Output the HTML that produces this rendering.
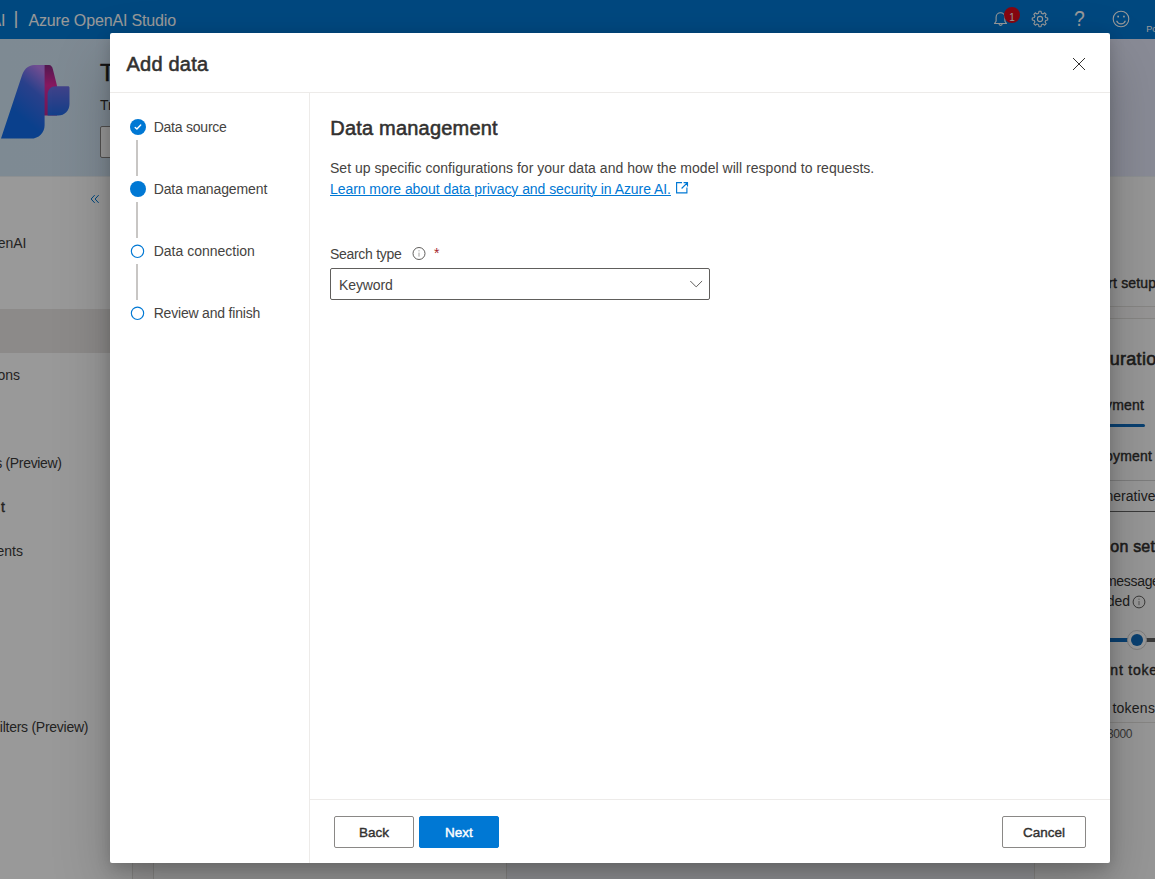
<!DOCTYPE html>
<html lang="en">
<head>
<meta charset="utf-8">
<title>Azure OpenAI Studio - Add data</title>
<style>
*{box-sizing:border-box;margin:0;padding:0}
html,body{width:1155px;height:879px;overflow:hidden;background:#fff}
body{font-family:"Liberation Sans",sans-serif;font-size:14px;color:#323130;position:relative}
.abs{position:absolute}
.t{position:absolute;white-space:nowrap;line-height:20px}
.sb{font-weight:400;-webkit-text-stroke:0.4px currentColor}
.sbl{font-weight:400;-webkit-text-stroke:0.55px currentColor}
/* ---------- background page ---------- */
#page{position:absolute;left:0;top:0;width:1155px;height:879px;background:#fff;overflow:hidden}
#topbar{position:absolute;left:0;top:0;width:1155px;height:39px;background:#0078d4}
#banner{position:absolute;left:0;top:39px;width:1155px;height:137px;background:linear-gradient(90deg,#d3e6f6 0%,#d8e8f8 60%,#e5e8fa 100%)}
#nav{position:absolute;left:0;top:176px;width:133px;height:703px;background:#fff;border-right:1px solid #e1dfdd}
#navsel{position:absolute;left:0;top:133px;width:132px;height:44px;background:#e9e7e5}
#main{position:absolute;left:133px;top:176px;width:1022px;height:703px;background:#faf9f8}
#rp{position:absolute;left:901px;top:0;width:121px;height:703px;background:#fcfcfc;border-left:1px solid #e1dfdd;overflow:hidden}
.nv{color:#3b3a39}
#mside .t,#mbody .t{color:#454341}
#mbody .t.sbl{color:#323130}
#overlay{position:absolute;left:0;top:0;width:1155px;height:879px;background:rgba(0,0,0,.4)}
/* ---------- modal ---------- */
#modal{position:absolute;left:110px;top:33px;width:1000px;height:830px;background:#fff;border-radius:2px;
 box-shadow:0 25.6px 57.6px 0 rgba(0,0,0,.22),0 4.8px 14.4px 0 rgba(0,0,0,.18)}
#mhead{position:absolute;left:0;top:0;width:1000px;height:60px;border-bottom:1px solid #edebe9}
#mside{position:absolute;left:0;top:60px;width:200px;height:770px;border-right:1px solid #edebe9}
#mfoot{position:absolute;left:200px;top:766px;width:800px;height:64px;border-top:1px solid #edebe9}
.dot{position:absolute;width:16px;height:16px;border-radius:50%;left:20px}
.dot.fill{background:#0078d4}
.dot.open{border:1px solid #0078d4;background:#fff}
.conn{position:absolute;left:26px;width:2px;height:36px;background:#c8c6c4}
.btn{position:absolute;height:32px;padding:0;margin:0;font-family:inherit;display:block;border:1px solid #8a8886;border-radius:2px;background:#fff;text-align:center;line-height:31px;font-weight:400;-webkit-text-stroke:0.4px currentColor;font-size:13.5px;color:#323130}
.btn.primary{background:#0078d4;border-color:#0078d4;color:#fff}
</style>
</head>
<body>
<div id="page">
  <div id="topbar">
    <div class="t" style="left:-9.6px;top:11px;font-size:16px;line-height:20px;color:#fff">AI</div>
    <div class="t" style="left:13.6px;top:6px;font-size:19px;line-height:24px;color:#fff">|</div>
    <div class="t" id="brand" style="left:28.5px;top:11px;font-size:16px;line-height:20px;color:#fff;letter-spacing:-0.15px">Azure OpenAI Studio</div>
    <svg class="abs" style="left:992px;top:10px" width="18" height="18" viewBox="0 0 18 18" fill="none" stroke="#fff" stroke-width="1.1"><path d="M2.5 13.5h12l-1.6-2.2V7.2a4.4 4.4 0 0 0-8.8 0v4.1z" stroke-linejoin="round"/><path d="M7 13.8a1.6 1.6 0 0 0 3.2 0"/></svg>
    <div class="abs" style="left:1004px;top:7px;width:16px;height:16px;border-radius:50%;background:#e00b1c"></div>
    <div class="t" style="left:1004px;top:9.5px;width:16px;text-align:center;font-size:10px;line-height:16px;color:#fff">1</div>
    <svg class="abs" style="left:1031px;top:10px" width="18" height="18" viewBox="-9 -9 18 18" fill="none" stroke="#fff" stroke-width="1.1"><circle r="2.6"/><path d="M-1.43 -5.72 L-1.07 -7.73 L1.07 -7.73 L1.43 -5.72 L3.04 -5.06 L4.71 -6.22 L6.22 -4.71 L5.06 -3.04 L5.72 -1.43 L7.73 -1.07 L7.73 1.07 L5.72 1.43 L5.06 3.04 L6.22 4.71 L4.71 6.22 L3.04 5.06 L1.43 5.72 L1.07 7.73 L-1.07 7.73 L-1.43 5.72 L-3.04 5.06 L-4.71 6.22 L-6.22 4.71 L-5.06 3.04 L-5.72 1.43 L-7.73 1.07 L-7.73 -1.07 L-5.72 -1.43 L-5.06 -3.04 L-6.22 -4.71 L-4.71 -6.22 L-3.04 -5.06Z" stroke-linejoin="round"/></svg>
    <div class="t" style="left:1074.4px;top:6px;font-size:22px;line-height:26px;color:#fff;transform:scaleX(.88);transform-origin:0 0">?</div>
    <svg class="abs" style="left:1111.7px;top:10px" width="18" height="18" viewBox="-9 -9 18 18" fill="none" stroke="#fff" stroke-width="1.1"><circle r="7.8"/><path d="M-4.4 1.8a4.7 4.7 0 0 0 8.8 0"/><rect x="-3.7" y="-3.3" width="1.7" height="1.7" fill="#fff" stroke="none"/><rect x="2.1" y="-3.3" width="1.7" height="1.7" fill="#fff" stroke="none"/></svg>
    <div class="t" style="left:1146.3px;top:23.4px;font-size:9px;line-height:12px;color:#fff">Po</div>
  </div>
  <div id="banner">
    <svg class="abs" style="left:0;top:21px" width="80" height="90" viewBox="0 60 80 90">
      <defs>
        <linearGradient id="lgA" x1="0.8" y1="0" x2="0.45" y2="0.7"><stop offset="0" stop-color="#bb80f2"/><stop offset=".42" stop-color="#466ce8"/><stop offset="1" stop-color="#116ce9"/></linearGradient>
        <linearGradient id="lgB" x1="0" y1="0" x2="0" y2="1"><stop offset="0" stop-color="#8a2884"/><stop offset=".4" stop-color="#e0289f"/><stop offset="1" stop-color="#b8288f"/></linearGradient>
        <linearGradient id="lgC" x1="0" y1="0" x2="0" y2="1"><stop offset="0" stop-color="#6e6fe6"/><stop offset="1" stop-color="#216ae6"/></linearGradient>
      </defs>
      <path d="M43 65h6c2 0 3.2 1.6 3.9 4.3l4.1 16.4v29.7H43z" fill="url(#lgB)"/>
      <path d="M1 138.6 21.6 76.5C23.6 70 27.6 65 34.5 65h10.1v60.2c0 7.6-5.9 13.4-13.6 13.4z" fill="url(#lgA)"/>
      <path d="M47.6 115.6V94.5c0-4.8 3.4-8.3 8.2-8.3h12.2c1 0 1.5.6 1.5 1.6v16c0 6.6-4.8 11.8-11.4 11.8z" fill="url(#lgC)"/>
    </svg>
    <div class="t sbl" style="left:100px;top:17.5px;font-size:24px;line-height:32px;color:#201f1e">T</div>
    <div class="t" style="left:100px;top:56px;font-size:14px;line-height:20px;color:#323130">Tr</div>
    <div class="abs" style="left:100px;top:87px;width:60px;height:32px;border:1px solid #8a8886;border-radius:2px;background:#fff"></div>
  </div>
  <div id="nav">
    <div id="navsel"></div>
    <svg class="abs" style="left:90.2px;top:18px" width="11" height="10" viewBox="0 0 11 10" fill="none" stroke="#0078d4" stroke-width="1"><path d="M4.7 1.1 1.1 5l3.6 3.9M8.7 1.1 5.1 5l3.6 3.9"/></svg>
    <div class="t nv" style="right:105.5px;top:57px">enAI</div>
    <div class="t nv" style="right:112px;top:189.4px">ons</div>
    <div class="t nv" style="right:70.4px;top:277px;letter-spacing:-.34px">s (Preview)</div>
    <div class="t nv sb" style="right:127px;top:321px">t</div>
    <div class="t nv" style="right:109px;top:365px">ents</div>
    <div class="t nv" style="right:43.8px;top:541px;letter-spacing:-.26px">ilters (Preview)</div>
  </div>
  <div id="main">
    <div class="abs" style="left:20px;top:0;width:354px;height:740px;background:#fff;border:1px solid #e1dfdd"></div>
    <div class="abs" style="left:373px;top:0;width:529px;height:740px;background:#f3f6fa;border:1px solid #e1dfdd"></div>
    <div id="rp">
      <div class="t sb" style="left:73.3px;top:97px;letter-spacing:.15px">rt setup</div>
      <div class="abs" style="left:0;top:130px;width:140px;height:13px;border-top:1px solid #e1dfdd;border-bottom:1px solid #e1dfdd;background:#faf9f8"></div>
      <div class="t sbl" style="left:74.7px;top:171px;font-size:18px;line-height:24px;letter-spacing:.3px">uratio</div>
      <div class="t sb" style="left:70px;top:219px;letter-spacing:.2px">yment</div>
      <div class="abs" style="left:60px;top:248px;width:50px;height:3px;background:#0f6cbd;border-radius:0 2px 2px 0"></div>
      <div class="t sb" style="left:70px;top:270px;letter-spacing:.2px">oyment</div>
      <div class="abs" style="left:0;top:304px;width:140px;height:32px;border-top:1px solid #d1d1d1;border-bottom:1px solid #616161"></div>
      <div class="t" style="left:70.4px;top:310px;letter-spacing:.05px">nerative</div>
      <div class="t sbl" style="left:75.3px;top:359.5px;font-size:16px;line-height:22px;letter-spacing:.2px">on sett</div>
      <div class="t" style="left:69.9px;top:394.7px;letter-spacing:-.3px">messages</div>
      <div class="t" style="left:71.7px;top:414.6px">ded</div>
      <svg class="abs" style="left:96.7px;top:418.5px" width="14" height="14" viewBox="0 0 14 14" fill="none" stroke="#605e5c" stroke-width="1"><circle cx="7" cy="7" r="5.9"/><path d="M7 6v4.2M7 3.6v1.2" stroke="#8a8886"/></svg>
      <div class="abs" style="left:0;top:462px;width:102px;height:4px;background:#0f6cbd"></div>
      <div class="abs" style="left:102px;top:462px;width:40px;height:4px;background:#616161"></div>
      <div class="abs" style="left:92px;top:454px;width:20px;height:20px;border-radius:50%;background:#fff;border:1px solid #d1d1d1"></div>
      <div class="abs" style="left:96px;top:458px;width:12px;height:12px;border-radius:50%;background:#0f6cbd"></div>
      <div class="t sb" style="left:75.3px;top:484px;letter-spacing:.8px">nt token</div>
      <div class="t" style="left:77.4px;top:521.5px;letter-spacing:.25px">tokens</div>
      <div class="abs" style="left:0;top:546px;width:140px;height:1px;background:#e1dfdd"></div>
      <div class="t" style="left:71.9px;top:550.3px;font-size:12px;line-height:16px;color:#605e5c;letter-spacing:-.4px">3000</div>
    </div>
  </div>
</div>
<div class="abs" style="left:0;top:176px;width:1155px;height:1px;background:#ecf0f4"></div>
<div id="overlay"></div>
<div id="modal" role="dialog" aria-label="Add data">
  <div id="mhead">
    <div class="t sbl" id="mtitle" style="left:16.5px;top:17px;font-size:20px;line-height:28px;letter-spacing:0.22px">Add data</div>
    <svg class="abs" style="left:962px;top:24px" width="14" height="14" viewBox="0 0 14 14" fill="none" stroke="#323130" stroke-width="1"><path d="M1 1 13 13M13 1 1 13"/></svg>
  </div>
  <div id="mside">
    <svg class="abs" style="left:20px;top:26px" width="16" height="16" viewBox="0 0 16 16"><circle cx="8" cy="8" r="8" fill="#0078d4"/><path d="M5.2 8.4 6.9 10.05 10.7 6.1" fill="none" stroke="#fff" stroke-width="1.4" stroke-linecap="round" stroke-linejoin="round"/></svg>
    <div class="conn" style="top:47px"></div>
    <svg class="abs" style="left:20px;top:88px" width="16" height="16" viewBox="0 0 16 16"><circle cx="8" cy="8" r="8" fill="#0078d4"/></svg>
    <div class="conn" style="top:109px"></div>
    <svg class="abs" style="left:20px;top:150px" width="16" height="16" viewBox="0 0 16 16"><circle cx="7.5" cy="8.3" r="6.15" fill="none" stroke="#0078d4" stroke-width="1.15"/></svg>
    <div class="conn" style="top:171px"></div>
    <svg class="abs" style="left:20px;top:212px" width="16" height="16" viewBox="0 0 16 16"><circle cx="7.5" cy="8.3" r="6.15" fill="none" stroke="#0078d4" stroke-width="1.15"/></svg>
    <div class="t" style="left:43.7px;top:24px;letter-spacing:-0.23px">Data source</div>
    <div class="t" style="left:43.7px;top:86px;letter-spacing:-0.11px">Data management</div>
    <div class="t" style="left:43.7px;top:148px">Data connection</div>
    <div class="t" style="left:43.7px;top:210px;letter-spacing:-0.2px">Review and finish</div>
  </div>
  <div id="mbody" class="abs" style="left:200px;top:60px;width:800px;height:706px">
    <div class="t sbl" style="left:20.3px;top:21px;font-size:20px;line-height:28px;letter-spacing:0.2px">Data management</div>
    <div class="t" style="left:20px;top:65px;line-height:21px;letter-spacing:0.03px">Set up specific configurations for your data and how the model will respond to requests.</div>
    <a class="t" style="left:20px;top:86px;line-height:21px;color:#0078d4;text-decoration:underline;text-underline-offset:1px;text-decoration-thickness:1px;letter-spacing:-0.055px">Learn more about data privacy and security in Azure AI.</a>
    <div class="t" style="left:20px;top:151px;letter-spacing:-0.3px">Search type</div>
    <div class="abs" style="left:20px;top:175px;width:380px;height:32px;border:1px solid #605e5c;border-radius:2px"></div>
    <div class="t" style="left:29px;top:182px;letter-spacing:-0.12px">Keyword</div>
    <svg class="abs" style="left:378px;top:185px" width="16" height="12" viewBox="0 0 16 12" fill="none" stroke="#605e5c" stroke-width="1"><path d="M2.3 3 8.2 8.9 14.1 3"/></svg>
    <svg class="abs" style="left:365px;top:88px" width="14" height="14" viewBox="0 0 14 14" fill="none" stroke="#0078d4" stroke-width="1.15"><path d="M7 1.6H1.6v10.3h10.3V6.6M8.6 1.6h3.9v3.9M12.5 1.6 6.6 7.5"/></svg>
    <svg class="abs" style="left:101px;top:153px" width="16" height="16" viewBox="0 0 16 16" fill="none" stroke="#605e5c" stroke-width="1"><circle cx="8" cy="7.5" r="6"/><path d="M8 6.6v4M8 4.2v1.2" stroke="#a19f9d"/></svg>
    <div class="t" style="left:124px;top:150px;color:#a4262c">*</div>
  </div>
  <div id="mfoot">
    <button type="button" class="btn" style="left:24px;top:16px;width:80px">Back</button>
    <button type="button" class="btn primary" style="left:109px;top:16px;width:80px">Next</button>
    <button type="button" class="btn" style="left:692px;top:16px;width:84px">Cancel</button>
  </div>
</div>
</body>
</html>
